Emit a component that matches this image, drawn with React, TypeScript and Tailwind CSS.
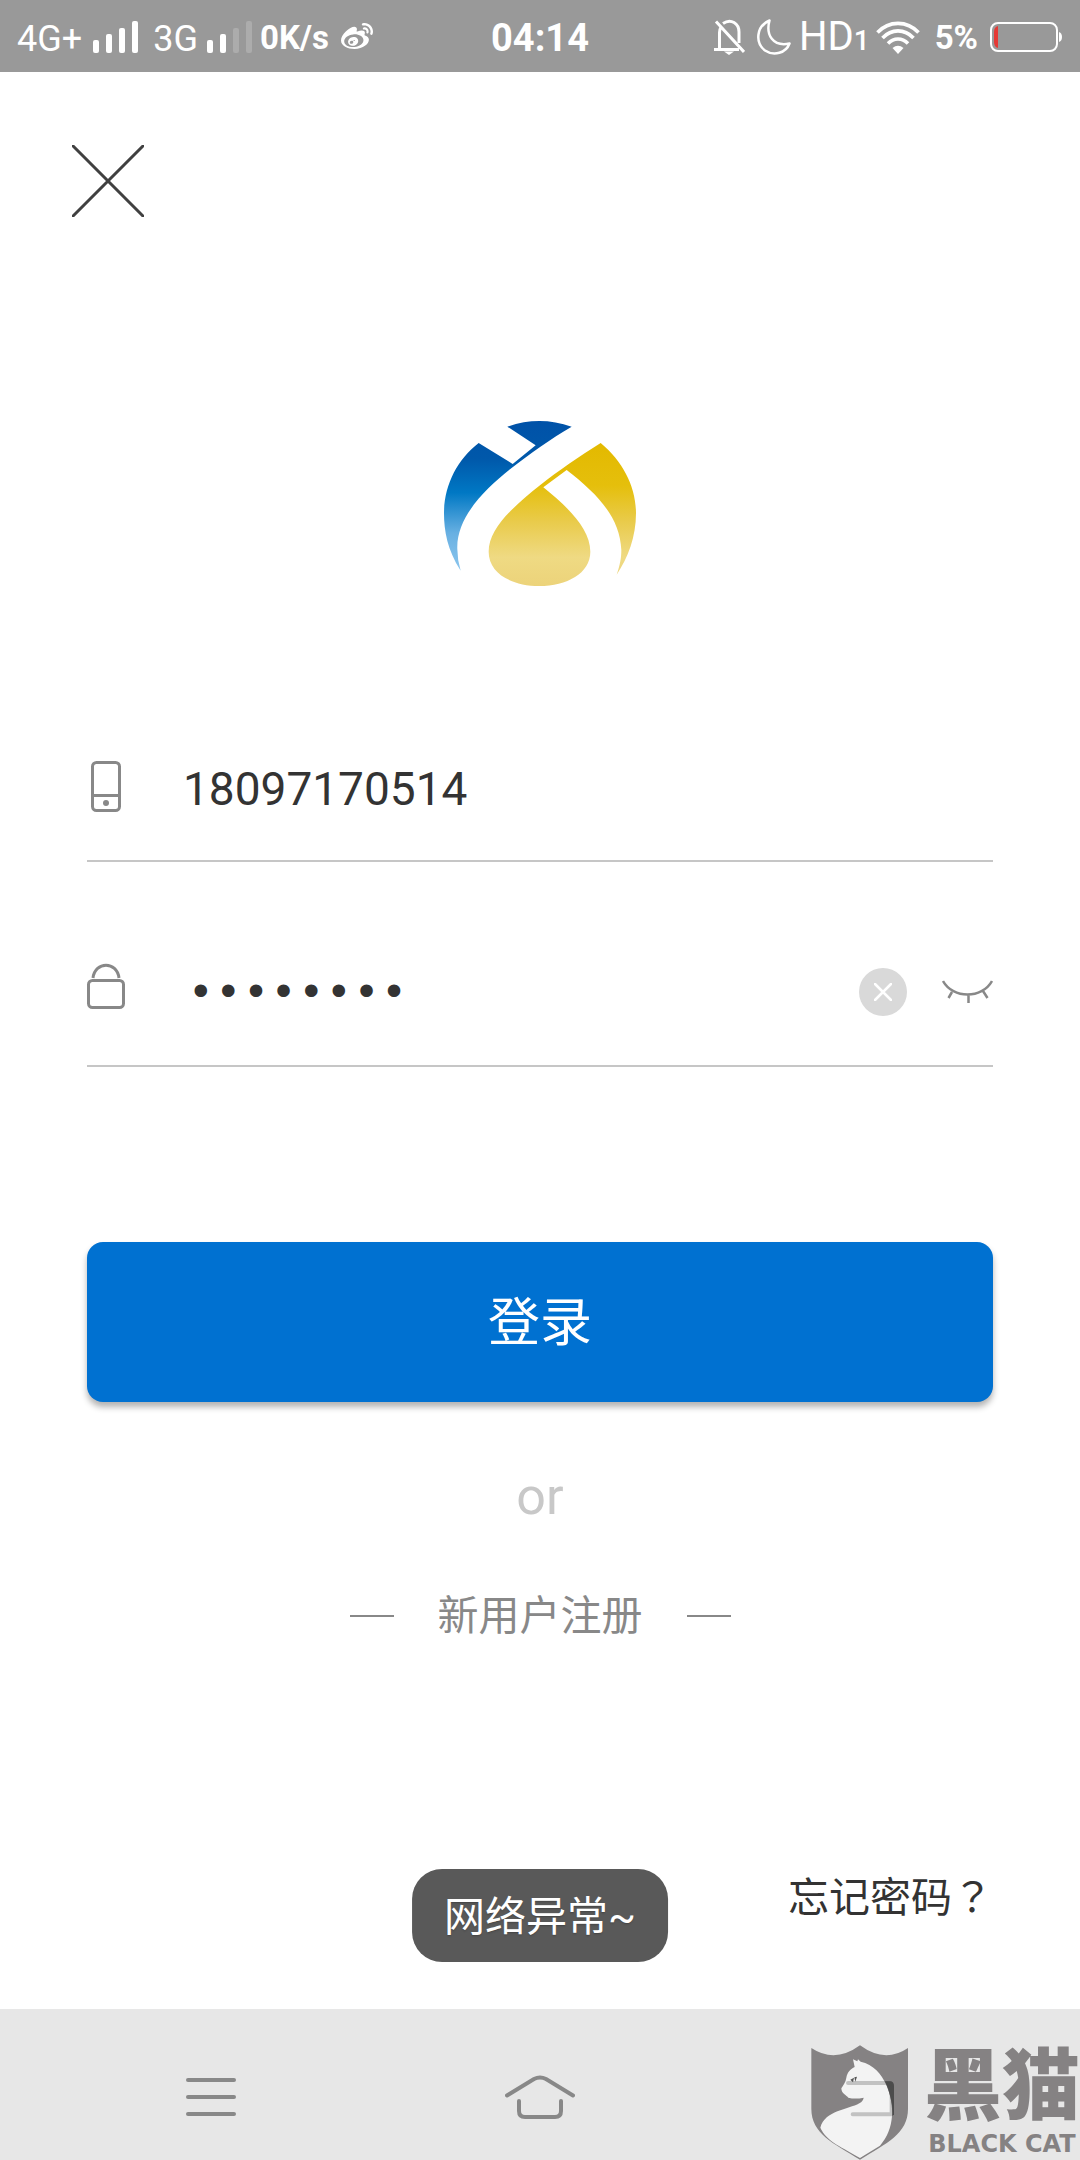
import { useState } from "react";
import clsx from "clsx";
import { FaWeibo } from "react-icons/fa";

function SignalBars({ level }: { level: number }) {
  const heights = ["h-[13px]", "h-[19px]", "h-[25px]", "h-8"];
  return (
    <span className="flex h-8 items-end gap-[7px]">
      {heights.map((height, i) => (
        <span
          key={height}
          className={clsx("w-[6px] rounded-xs", height, i < level ? "bg-white" : "bg-[#acacac]")}
        />
      ))}
    </span>
  );
}

function BellOffIcon() {
  return (
    <svg width="31" height="36" viewBox="0 0 31 36" fill="none" stroke="#fff" strokeWidth="3">
      <path d="M5.500 30V13.500Q5.500 10.500 7 8.500M9 4.500C17 -1 25 4.500 25 13V24" />
      <path d="M0 30.500H25M2 2.500L30 33" />
      <path d="M10 32.500H20L15 36Z" fill="#fff" stroke="none" />
    </svg>
  );
}

function MoonIcon() {
  return (
    <svg width="34" height="36" viewBox="0 0 34 36" fill="none" stroke="#fff" strokeWidth="2.500" strokeLinejoin="round">
      <path d="M12.500 1.500C-1 7-2 24 8 31.500C17 37.500 29 34 32.500 24.500C16 28 8.500 16 12.500 1.500Z" />
    </svg>
  );
}

function WifiIcon() {
  return (
    <svg width="44" height="33" viewBox="0 0 44 33" fill="none" stroke="#fff" strokeWidth="3.600">
      <path d="M1.500 11.500C13-.7 31-.7 42.500 11.500" />
      <path d="M6.500 17C15.500 7.500 28.500 7.500 37.500 17" />
      <path d="M12 22.500C18 16.500 26 16.500 32 22.500" />
      <path d="M16.500 27Q22 22.500 27.500 27L22 33Z" fill="#fff" stroke="none" />
    </svg>
  );
}

function BatteryIcon() {
  return (
    <svg width="73" height="30" viewBox="0 0 73 30" fill="none">
      <rect x="1" y="1" width="66" height="28" rx="7" stroke="#fff" strokeWidth="2" />
      <path d="M8 4V26Q4 25 4 20V10Q4 5 8 4Z" fill="#e53935" />
      <path d="M69 10Q72 11 72 15T69 20Z" fill="#fff" />
    </svg>
  );
}

function StatusBar() {
  return (
    <header className="grid h-[72px] grid-cols-[1fr_auto_1fr] items-center bg-[#999] pt-[2px] pr-[17px] pl-[17px] text-white">
      <div className="flex items-center">
        <span className="pt-1 text-[36px] leading-10">4G+</span>
        <span className="ml-[11px] flex">
          <SignalBars level={4} />
        </span>
        <span className="ml-[15px] pt-1 text-[36px] leading-10">3G</span>
        <span className="ml-[9px] flex">
          <SignalBars level={2} />
        </span>
        <span className="ml-2 pt-[2px] text-[33px] leading-10 font-bold">0K/s</span>
        <FaWeibo className="ml-3 size-8" />
      </div>
      <time className="pt-[2px] text-[38px] leading-10 font-bold">04:14</time>
      <div className="flex items-center justify-end">
        <BellOffIcon />
        <span className="ml-3 flex">
          <MoonIcon />
        </span>
        <span className="ml-2 flex items-baseline pt-1 leading-10">
          <span className="text-[40px]">HD</span>
          <span className="text-[28px] font-medium">1</span>
        </span>
        <span className="ml-[6px] flex">
          <WifiIcon />
        </span>
        <span className="ml-[15px] pt-[2px] text-[33px] leading-10 font-bold">5%</span>
        <span className="ml-3 flex">
          <BatteryIcon />
        </span>
      </div>
    </header>
  );
}

function Logo() {
  return (
    <svg width="192" height="165" viewBox="72 63 576 495" role="img" aria-label="Logo">
      <defs>
        <linearGradient id="logo-blue" gradientUnits="userSpaceOnUse" x1="0" y1="63" x2="0" y2="512">
          <stop offset="0" stopColor="#0052a8" />
          <stop offset="0.25" stopColor="#0058aa" />
          <stop offset="0.48" stopColor="#0078c4" />
          <stop offset="0.75" stopColor="#68b0e2" />
          <stop offset="1" stopColor="#8cc6ee" />
        </linearGradient>
        <linearGradient id="logo-gold" gradientUnits="userSpaceOnUse" x1="0" y1="129" x2="0" y2="558">
          <stop offset="0" stopColor="#e3b900" />
          <stop offset="0.3" stopColor="#e5bf0c" />
          <stop offset="0.55" stopColor="#e9cb4b" />
          <stop offset="0.8" stopColor="#efda83" />
          <stop offset="1" stopColor="#ecd37a" />
        </linearGradient>
      </defs>
      <path
        fill="url(#logo-blue)"
        d="M262 80Q358 46 455 80C395 115 330 160 270 208C190 272 108 355 112 448Q112 480 122 512C82 450 72 392 72 340C72 258 110 180 176 129L278 192L347 136Z"
      />
      <path
        fill="url(#logo-gold)"
        d="M542 129C610 185 648 262 648 340C648 410 624 474 590 524C600 495 604 475 604 450C600 350 530 280 440 210L370 262C440 318 511 385 511 455C511 520 440 558 358 558C275 558 206 520 206 455C206 385 280 320 360 256C415 212 480 168 542 129Z"
      />
    </svg>
  );
}

function PhoneIcon() {
  return (
    <svg width="38" height="52" viewBox="0 0 38 52" fill="none" stroke="#888" strokeWidth="3">
      <rect x="5.500" y="1.500" width="27" height="48" rx="4" />
      <path d="M5 34.500H33" />
      <circle cx="19" cy="42" r="3" fill="#888" stroke="none" />
    </svg>
  );
}

function LockIcon() {
  return (
    <svg width="38" height="52" viewBox="0 0 38 52" fill="none" stroke="#888" strokeWidth="3" className="overflow-visible">
      <rect x="1.500" y="14.500" width="35" height="27" rx="4" />
      <path d="M6 12C8-5 30-5 32 12" />
    </svg>
  );
}

function ShieldCat() {
  return (
    <svg width="97" height="115" viewBox="93 134 291 345">
      <path
        fill="#858283"
        d="M94 143Q165 190 240 135Q315 190 384 143V325C384 400 320 428 240 478C160 428 94 400 94 325Z"
      />
      <path
        fill="#f3f3f3"
        d="M219 177L232 183L234 177L242 184C280 192 305 222 318 252C345 315 345 385 300 436L240 473C190 442 140 425 121 382C135 330 205 328 238 309Q250 302 251 292Q225 297 205 292C200 285 184 280 184 264C190 254 197 246 199 232C202 215 212 206 224 200Z"
      />
      <path fill="none" stroke="#000" strokeOpacity="0.200" strokeWidth="12" strokeLinecap="round" strokeLinejoin="round" d="M204 248H326Q335 248 335 258V342H218" />
      <path fill="#4c4c4c" d="M315 243H330Q342 243 342 258V344H338C338 305 328 272 315 243Z" />
      <path fill="#555" d="M211 238L222 232L219 246Z M223 231L231 229L226 244Z" />
    </svg>
  );
}

function Watermark() {
  return (
    <div className="pointer-events-none absolute right-0 bottom-0 flex items-end gap-4 text-[#858283]">
      <ShieldCat />
      <div className="flex flex-col items-center">
        <span className="text-[78px] leading-20 font-black">黑猫</span>
        <span className="font-['DejaVu_Sans'] text-[24px] leading-8 font-bold">BLACK CAT</span>
      </div>
    </div>
  );
}

function NavBar() {
  return (
    <nav className="grid h-[151px] grid-cols-[1fr_auto_1fr] items-center bg-[#e7e7e7] px-[186px]">
      <button type="button" aria-label="菜单" className="flex w-[50px] flex-col gap-[13px] pt-6">
        <span className="h-1 w-full rounded-full bg-[#888]" />
        <span className="h-1 w-full rounded-full bg-[#888]" />
        <span className="h-1 w-full rounded-full bg-[#888]" />
      </button>
      <button type="button" aria-label="主页" className="pt-6">
        <svg width="70" height="44" viewBox="0 0 70 44" fill="none" stroke="#888" strokeWidth="4" strokeLinecap="round">
          <path d="M2 20.500L29 4Q35 1 41 4L68 20.500" />
          <path d="M14 26V36Q14 42 20 42H50Q56 42 56 36V26" />
        </svg>
      </button>
      <span />
    </nav>
  );
}

export default function App() {
  const [phone, setPhone] = useState("18097170514");
  const [password, setPassword] = useState("12345678");
  const [showPassword, setShowPassword] = useState(false);

  return (
    <div className="relative flex min-h-screen flex-col bg-white font-[Roboto,'Noto_Sans_CJK_SC',sans-serif] text-[#333]">
      <StatusBar />

      <main className="flex flex-1 flex-col px-[87px] pb-[85px]">
        <button type="button" aria-label="关闭" className="mt-[73px] -ml-[15px] self-start">
          <svg width="72" height="72" viewBox="0 0 72 72" stroke="#404040" strokeWidth="3">
            <path d="M0 0L72 72M72 0L0 72" />
          </svg>
        </button>

        <div className="mt-[204px] flex justify-center">
          <Logo />
        </div>

        <form className="mt-[171px] flex flex-col" onSubmit={(e) => e.preventDefault()}>
          <div className="flex items-center border-b-2 border-[#c6c6c6] pb-[43px]">
            <label htmlFor="phone" aria-label="手机号">
              <PhoneIcon />
            </label>
            <input
              id="phone"
              type="tel"
              value={phone}
              onChange={(e) => setPhone(e.target.value)}
              className="ml-[58px] h-[60px] min-w-0 flex-1 pt-1 text-[46px] outline-none"
            />
          </div>

          <div className="mt-[100px] flex items-center border-b-2 border-[#c6c6c6] pb-[43px]">
            <label htmlFor="password" aria-label="密码">
              <LockIcon />
            </label>
            <input
              id="password"
              type={showPassword ? "text" : "password"}
              value={password}
              onChange={(e) => setPassword(e.target.value)}
              className="ml-[62px] h-[60px] min-w-0 flex-1 pt-1 font-['Liberation_Mono',monospace] text-[46px] outline-none"
            />
            <button
              type="button"
              aria-label="清除"
              onClick={() => setPassword("")}
              className="flex size-12 items-center justify-center rounded-full bg-[#d9d9d9]"
            >
              <svg width="18" height="18" viewBox="0 0 18 18" stroke="#fff" strokeWidth="2.500" strokeLinecap="round">
                <path d="M1 1L17 17M17 1L1 17" />
              </svg>
            </button>
            <button
              type="button"
              aria-label="显示密码"
              onClick={() => setShowPassword(!showPassword)}
              className="ml-[35px]"
            >
              <svg width="51" height="24" viewBox="0 0 51 24" fill="none" stroke="#888" strokeWidth="2.500">
                <path d="M1 1C11 19 40 19 50 1M10 12L6.500 18M26.500 15V23M41 11L45.500 18" />
              </svg>
            </button>
          </div>

          <button
            type="submit"
            className="mt-[175px] h-40 rounded-2xl bg-[#0071d1] pt-1 text-[52px] text-white shadow-[0_5px_6px_rgba(0,0,0,0.3)]"
          >
            登录
          </button>
        </form>

        <p className="mt-[65px] text-center text-[52px] leading-[60px] text-[#c8c8c8]">or</p>

        <div className="mt-[59px] flex items-center justify-center gap-[44px] text-[#888]">
          <span className="h-[2px] w-[44px] bg-[#888]" />
          <a href="#register" className="text-[41px] leading-[60px]">
            新用户注册
          </a>
          <span className="h-[2px] w-[44px] bg-[#888]" />
        </div>

        {/* the TC face centres the full-width question mark */}
        <a
          href="#forgot"
          className="mt-auto self-end font-['Noto_Sans_CJK_TC',sans-serif] text-[41px] leading-[60px]"
        >
          忘记密码？
        </a>
      </main>

      <NavBar />

      <div
        role="status"
        className="absolute bottom-[198px] left-1/2 flex h-[93px] -translate-x-1/2 items-center rounded-[30px] bg-[#595959] px-8 pt-1 text-[41px] whitespace-nowrap text-white text-shadow-sm"
      >
        网络异常~
      </div>

      <Watermark />
    </div>
  );
}
